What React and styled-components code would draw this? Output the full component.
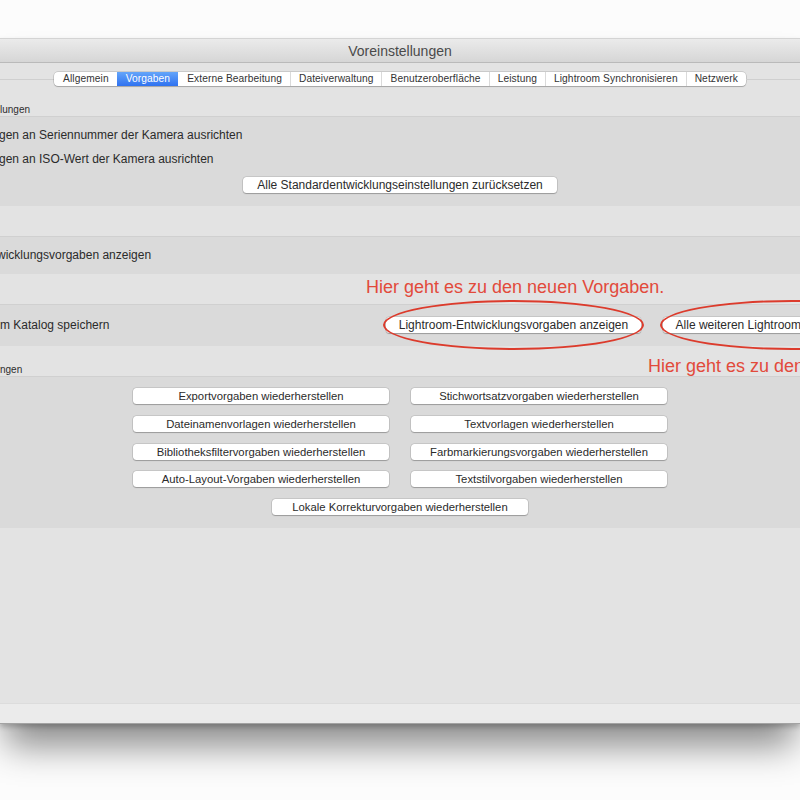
import React from 'react';
import styled, { createGlobalStyle } from 'styled-components';

const GlobalStyle = createGlobalStyle`
  html, body {
    margin: 0;
    padding: 0;
    background: #fcfcfc;
    overflow: hidden;
  }
  body {
    font-family: "Liberation Sans", Arial, sans-serif;
  }
`;

const tabs = [
  'Allgemein',
  'Vorgaben',
  'Externe Bearbeitung',
  'Dateiverwaltung',
  'Benutzeroberfläche',
  'Leistung',
  'Lightroom Synchronisieren',
  'Netzwerk',
];

const restoreButtons = [
  'Exportvorgaben wiederherstellen',
  'Stichwortsatzvorgaben wiederherstellen',
  'Dateinamenvorlagen wiederherstellen',
  'Textvorlagen wiederherstellen',
  'Bibliotheksfiltervorgaben wiederherstellen',
  'Farbmarkierungsvorgaben wiederherstellen',
  'Auto-Layout-Vorgaben wiederherstellen',
  'Textstilvorgaben wiederherstellen',
];

const App = () => {
  return (
    <Page>
      <GlobalStyle />
      <Window>
        <TitleBar>Voreinstellungen</TitleBar>
        <Content>
          <TabRow>
            <TabLine />
            <Tabs>
              {tabs.map((t, i) => (
                <Tab key={t} $active={i === 1} $first={i === 0} $afterActive={i === 2}>
                  {t}
                </Tab>
              ))}
            </Tabs>
            <TabLine />
          </TabRow>

          <Gap>
            <SectionLabel>lungen</SectionLabel>
          </Gap>
          <Box $height={90} $pad="10px 0 13px">
            <CheckRow>gen an Seriennummer der Kamera ausrichten</CheckRow>
            <CheckRow $mt={8}>gen an ISO-Wert der Kamera ausrichten</CheckRow>
            <Centered $mt={10}>
              <Button $width={314}>Alle Standardentwicklungseinstellungen zurücksetzen</Button>
            </Centered>
          </Box>

          <Gap />
          <Box $height={38} $pad="10px 0 0">
            <CheckRow $indent={-3}>wicklungsvorgaben anzeigen</CheckRow>
          </Box>

          <Gap>
            <Note $x={366} $y={3}>Hier geht es zu den neuen Vorgaben.</Note>
          </Gap>
          <Box $height={42} $pad="12px 0 0">
            <ButtonRow>
              <RowLabel>m Katalog speichern</RowLabel>
              <Circled>
                <Button $width={255}>Lightroom-Entwicklungsvorgaben anzeigen</Button>
              </Circled>
              <Circled>
                <Button $width={258}>Alle weiteren Lightroom-Vorgaben anzeigen</Button>
              </Circled>
            </ButtonRow>
          </Box>

          <Gap>
            <SectionLabel>ngen</SectionLabel>
            <Note $x={648} $y={10}>Hier geht es zu den weiteren Vorgaben.</Note>
          </Gap>
          <Box $height={152} $pad="11px 0 0">
            <ButtonGrid>
              {restoreButtons.map((b) => (
                <Button key={b} $small>
                  {b}
                </Button>
              ))}
              <WideCell>
                <Button $small $width={256}>Lokale Korrekturvorgaben wiederherstellen</Button>
              </WideCell>
            </ButtonGrid>
          </Box>

          <Filler />
          <BottomBar />
        </Content>
      </Window>
    </Page>
  );
};

const Page = styled.div`
  width: 800px;
  height: 800px;
  padding-top: 38px;
  box-sizing: border-box;
  overflow: hidden;
`;

const Window = styled.div`
  height: 686px;
  display: flex;
  flex-direction: column;
  box-sizing: border-box;
  border-top: 1px solid #d4d4d4;
  border-bottom: 1px solid #a3a3a3;
  box-shadow: 0 3px 5px rgba(0, 0, 0, 0.2), 0 28px 34px -6px rgba(0, 0, 0, 0.45);
`;

const TitleBar = styled.div`
  height: 23px;
  flex: 0 0 23px;
  border-bottom: 1px solid #bababa;
  background: linear-gradient(#ebebeb, #d6d6d6);
  color: #4a4a4a;
  font-size: 14px;
  line-height: 24px;
  text-align: center;
`;

const Content = styled.div`
  flex: 1;
  display: flex;
  flex-direction: column;
  background: #e3e3e3;
`;

const TabRow = styled.div`
  display: flex;
  align-items: center;
  margin-top: 9px;
  height: 14px;
`;

const TabLine = styled.div`
  flex: 1;
  height: 1px;
  margin-top: 1px;
  background: #cfcfcf;
`;

const Tabs = styled.div`
  display: flex;
  background: #fff;
  border-radius: 4px;
  overflow: hidden;
  box-shadow: 0 0 0 0.5px rgba(0, 0, 0, 0.22), 0 1px 1px rgba(0, 0, 0, 0.18);
`;

const Tab = styled.div`
  padding: 0 8px;
  font-size: 10.2px;
  letter-spacing: 0.1px;
  line-height: 14px;
  height: 14px;
  white-space: nowrap;
  color: ${(p) => (p.$active ? '#fff' : '#333')};
  background: ${(p) => (p.$active ? 'linear-gradient(#64a5fa, #2f72f0)' : 'transparent')};
  border-left: 1px solid
    ${(p) => (p.$first || p.$active || p.$afterActive ? 'transparent' : '#dadada')};
`;

const Gap = styled.div`
  position: relative;
  height: 30px;
  flex: 0 0 30px;
  display: flex;
  align-items: flex-end;
`;

const SectionLabel = styled.div`
  font-size: 10px;
  line-height: 12px;
  color: #2e2e2e;
`;

const Note = styled.div`
  position: absolute;
  left: ${(p) => p.$x}px;
  top: ${(p) => p.$y}px;
  font-size: 18px;
  line-height: 20px;
  color: #e24a3b;
  white-space: nowrap;
`;

const Box = styled.div`
  height: ${(p) => p.$height}px;
  flex: 0 0 ${(p) => p.$height}px;
  box-sizing: border-box;
  padding: ${(p) => p.$pad};
  background: #dadada;
  border-top: 1px solid #d0d0d0;
  display: flex;
  flex-direction: column;
`;

const CheckRow = styled.div`
  margin-top: ${(p) => p.$mt || 0}px;
  margin-left: ${(p) => p.$indent ?? -1}px;
  font-size: 12px;
  line-height: 16px;
  color: #2b2b2b;
  white-space: nowrap;
`;

const Centered = styled.div`
  margin-top: ${(p) => p.$mt || 0}px;
  display: flex;
  justify-content: center;
`;

const Button = styled.button`
  width: ${(p) => (p.$width ? `${p.$width}px` : '100%')};
  height: 16px;
  padding: 0;
  border: none;
  border-radius: 3.5px;
  background: #fff;
  color: #2b2b2b;
  font-family: inherit;
  font-size: ${(p) => (p.$small ? '11.3px' : '12px')};
  line-height: 16px;
  white-space: nowrap;
  flex-shrink: 0;
  box-shadow: 0 0 0 0.5px rgba(0, 0, 0, 0.18), 0 1px 1px rgba(0, 0, 0, 0.22);
`;

const ButtonRow = styled.div`
  display: flex;
  align-items: center;
  gap: 22px;
`;

const RowLabel = styled.div`
  flex: 0 0 364px;
  font-size: 12px;
  line-height: 16px;
  color: #2b2b2b;
  white-space: nowrap;
`;

const Circled = styled.div`
  position: relative;
  display: flex;
  flex-shrink: 0;

  &::after {
    content: '';
    position: absolute;
    left: -3px;
    right: -3px;
    top: -17px;
    bottom: -17px;
    border: 2.7px solid #dc3b2c;
    border-radius: 50%;
    pointer-events: none;
  }
`;

const ButtonGrid = styled.div`
  display: grid;
  grid-template-columns: 256px 256px;
  column-gap: 22px;
  row-gap: 11.75px;
  justify-content: center;
`;

const WideCell = styled.div`
  grid-column: 1 / -1;
  display: flex;
  justify-content: center;
`;

const Filler = styled.div`
  flex: 1;
`;

const BottomBar = styled.div`
  height: 20px;
  flex: 0 0 20px;
  box-sizing: border-box;
  background: #ebebeb;
  border-top: 1px solid #dcdcdc;
`;

export default App;
